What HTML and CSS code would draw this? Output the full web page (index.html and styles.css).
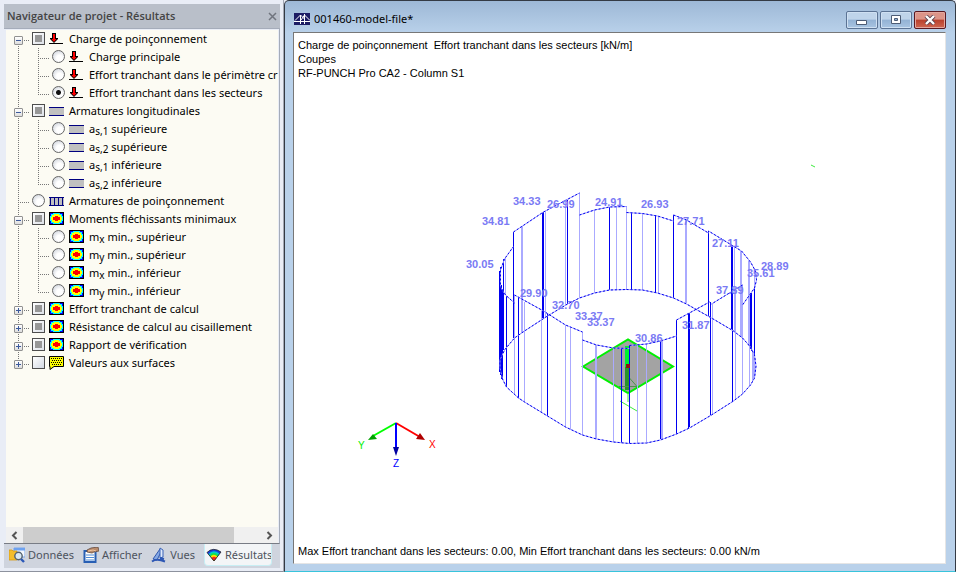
FILE: index.html
```html
<!DOCTYPE html>
<html lang="fr">
<head>
<meta charset="utf-8">
<title>001460-model-file</title>
<link rel="stylesheet" href="styles.css">
</head>
<body>
<svg class="defs" aria-hidden="true">
  <defs>
    <symbol id="i-load" viewBox="0 0 15 14">
      <path d="M3 1h4v5h2v1L5 11 1 7V6h2z" fill="#000"/>
      <path d="M4 2h2v5h1.500L5 10 2.500 7H4z" fill="#f00"/>
      <path d="M0 11.500h14" stroke="#000"/>
    </symbol>
    <symbol id="i-rebar" viewBox="0 0 15 14">
      <path d="M0 3h15v9H0z" fill="#c0c0c0"/>
      <path d="M0 3.500h15M0 11.500h15" stroke="#000080"/>
    </symbol>
    <symbol id="i-punch" viewBox="0 0 15 14">
      <path d="M0 3h15v9H0z" fill="#c0c0c0"/>
      <path d="M0 3.500h15M0 11.500h15M1.500 3v9M5.500 3v9M9.500 3v9M13.500 3v9" stroke="#000080"/>
    </symbol>
    <symbol id="i-iso" viewBox="0 0 15 14">
      <path d="M0 0h15v13H0z" fill="#00f"/>
      <path d="M0 0h2v1H1v1H0zM15 0h-2v1h1v1h1zM0 13h2v-1H1v-1H0zM15 13h-2v-1h1v-1h1z"/>
      <path d="M4 1h7v1h2v2h1v5h-1v2h-2v1H4v-1H2V9H1V4h1V2h2z" fill="#0ff"/>
      <path d="M5 2h5v1h2v2h1v3h-1v2h-2v1H5v-1H3V8H2V5h1V3h2z" fill="#ff0"/>
      <path d="M6 4h3v1h2v3H9v1H6V8H4V5h2z" fill="#f00"/>
      <path d="M.5.500h14v12H.500z" fill="none" stroke="#000"/>
    </symbol>
    <symbol id="i-note" viewBox="0 0 15 14">
      <path d="M.5.500h14v10H5L1 13.500V10.500H.500z" fill="#ff0" stroke="#000"/>
      <path d="M2 2.500h11M3 4.500h10M2 6.500h11M3 8.500h10" stroke="#000" stroke-dasharray="1 1"/>
    </symbol>
  </defs>
</svg>
<div class="app">
  <aside class="navigator">
    <div class="panel">
      <header class="panel-title">
        <h1>Navigateur de projet - Résultats</h1>
        <button class="panel-close" aria-label="Fermer"><svg viewBox="0 0 9 9"><path d="M1 1l7 7M8 1L1 8"/></svg></button>
      </header>
      <div class="tree-frame">
        <ul class="tree">
          <li>
            <div class="row"><span class="guide first"><button class="toggle open" aria-label="Réduire"></button></span><input type="checkbox" class="partial" id="n1"><svg class="icon"><use href="#i-load"/></svg><label for="n1">Charge de poinçonnement</label></div>
            <ul>
              <li class="row"><span class="pass"></span><span class="guide"></span><input type="radio" name="r" id="n2"><svg class="icon"><use href="#i-load"/></svg><label for="n2">Charge principale</label></li>
              <li class="row"><span class="pass"></span><span class="guide"></span><input type="radio" name="r" id="n3"><svg class="icon"><use href="#i-load"/></svg><label for="n3">Effort tranchant dans le périmètre critique</label></li>
              <li class="row"><span class="pass"></span><span class="guide last"></span><input type="radio" name="r" id="n4" checked><svg class="icon"><use href="#i-load"/></svg><label for="n4">Effort tranchant dans les secteurs</label></li>
            </ul>
          </li>
          <li>
            <div class="row"><span class="guide"><button class="toggle open" aria-label="Réduire"></button></span><input type="checkbox" class="partial" id="n5"><svg class="icon"><use href="#i-rebar"/></svg><label for="n5">Armatures longitudinales</label></div>
            <ul>
              <li class="row"><span class="pass"></span><span class="guide"></span><input type="radio" name="r" id="n6"><svg class="icon"><use href="#i-rebar"/></svg><label for="n6">a<sub>s,1</sub> supérieure</label></li>
              <li class="row"><span class="pass"></span><span class="guide"></span><input type="radio" name="r" id="n7"><svg class="icon"><use href="#i-rebar"/></svg><label for="n7">a<sub>s,2</sub> supérieure</label></li>
              <li class="row"><span class="pass"></span><span class="guide"></span><input type="radio" name="r" id="n8"><svg class="icon"><use href="#i-rebar"/></svg><label for="n8">a<sub>s,1</sub> inférieure</label></li>
              <li class="row"><span class="pass"></span><span class="guide last"></span><input type="radio" name="r" id="n9"><svg class="icon"><use href="#i-rebar"/></svg><label for="n9">a<sub>s,2</sub> inférieure</label></li>
            </ul>
          </li>
          <li class="row"><span class="guide"></span><input type="radio" name="r" id="n10"><svg class="icon"><use href="#i-punch"/></svg><label for="n10">Armatures de poinçonnement</label></li>
          <li>
            <div class="row"><span class="guide"><button class="toggle open" aria-label="Réduire"></button></span><input type="checkbox" class="partial" id="n11"><svg class="icon"><use href="#i-iso"/></svg><label for="n11">Moments fléchissants minimaux</label></div>
            <ul>
              <li class="row"><span class="pass"></span><span class="guide"></span><input type="radio" name="r" id="n12"><svg class="icon"><use href="#i-iso"/></svg><label for="n12">m<sub>x</sub> min., supérieur</label></li>
              <li class="row"><span class="pass"></span><span class="guide"></span><input type="radio" name="r" id="n13"><svg class="icon"><use href="#i-iso"/></svg><label for="n13">m<sub>y</sub> min., supérieur</label></li>
              <li class="row"><span class="pass"></span><span class="guide"></span><input type="radio" name="r" id="n14"><svg class="icon"><use href="#i-iso"/></svg><label for="n14">m<sub>x</sub> min., inférieur</label></li>
              <li class="row"><span class="pass"></span><span class="guide last"></span><input type="radio" name="r" id="n15"><svg class="icon"><use href="#i-iso"/></svg><label for="n15">m<sub>y</sub> min., inférieur</label></li>
            </ul>
          </li>
          <li class="row"><span class="guide"><button class="toggle" aria-label="Développer"></button></span><input type="checkbox" class="partial" id="n16"><svg class="icon"><use href="#i-iso"/></svg><label for="n16">Effort tranchant de calcul</label></li>
          <li class="row"><span class="guide"><button class="toggle" aria-label="Développer"></button></span><input type="checkbox" class="partial" id="n17"><svg class="icon"><use href="#i-iso"/></svg><label for="n17">Résistance de calcul au cisaillement</label></li>
          <li class="row"><span class="guide"><button class="toggle" aria-label="Développer"></button></span><input type="checkbox" class="partial" id="n18"><svg class="icon"><use href="#i-iso"/></svg><label for="n18">Rapport de vérification</label></li>
          <li class="row"><span class="guide last"><button class="toggle" aria-label="Développer"></button></span><input type="checkbox" id="n19"><svg class="icon"><use href="#i-note"/></svg><label for="n19">Valeurs aux surfaces</label></li>
        </ul>
        <div class="scrollbar">
          <button aria-label="Défiler à gauche"><svg viewBox="0 0 7 9"><path d="M5.500 1L2 4.500 5.500 8"/></svg></button>
          <span class="thumb"></span>
          <button aria-label="Défiler à droite"><svg viewBox="0 0 7 9"><path d="M1.500 1L5 4.500 1.500 8"/></svg></button>
        </div>
      </div>
      <nav class="tabs">
        <button><svg viewBox="0 0 16 16"><path d="M5 1h11v9H5z" fill="#f4f8ff" stroke="#7aa7ea"/><path d="M5 1h11v2.500H5z" fill="#6ea2f0"/><path d="M0 3h3l1 1h4v9H0z" fill="#f3bd2c" stroke="#d79b10" stroke-width=".8"/><circle cx="9.500" cy="9" r="3.700" fill="#d9e8f4" stroke="#53606e" stroke-width="1.400"/><path d="M12 12l3 3" stroke="#2b58b8" stroke-width="2.400"/></svg>Données</button>
        <button><svg viewBox="0 0 16 16"><path d="M1.500 4h11v11h-11z" fill="#fff" stroke="#285fb4" stroke-width="2"/><path d="M3 8h8M3 10.500h8M3 13h8" stroke="#4f8ad4"/><path d="M4 3l4-2 7-1 1 4-5 1-2 1-5-1z" fill="#b98b6c" stroke="#62493c" stroke-width=".8"/><path d="M5 4l5-1 3 1" stroke="#f0c5a0" fill="none"/></svg>Afficher</button>
        <button><svg viewBox="0 0 16 16"><path d="M2 12l7-10 2 1-5 10z" fill="#86a9e4" stroke="#2f56ac"/><path d="M9 1l3 2v7l-3 1z" fill="#dfe9fb" stroke="#3862b8"/><path d="M1 14.500c4-3 8-2 13 0M9 11l4 1" stroke="#2d57b4" stroke-width="2" fill="none"/></svg>Vues</button>
        <button class="active" aria-current="page"><svg viewBox="0 0 16 16"><path d="M1 5.500Q7-.5 15 5l-7 9z" fill="#173ee0"/><path d="M2.500 7Q7 2 13.500 6.500L8 14z" fill="#0cc"/><path d="M3.500 8.500Q7 4 12.500 8L8 14z" fill="#15e24a"/><path d="M4.500 9.500Q7.500 6 11.500 9.500L8 14z" fill="#fd0"/><path d="M5.500 11Q8 8.500 10.500 11L8 14z" fill="#f22"/><path d="M1 5.500Q7-.5 15 5l-7 9z" fill="none" stroke="#222" stroke-width=".8"/></svg>Résultats</button>
      </nav>
    </div>
  </aside>
  <main class="window">
    <header class="window-title">
      <svg class="logo" viewBox="0 0 16 12"><path d="M0 0h16v12H0z" fill="#1c1c64"/><path d="M0 8.500h16M1 7.500L6.500 2v9M6.500 2l4 4M10.500 1v10M7 7l3.500-5L16 7.500" stroke="#fff" fill="none"/></svg>
      <h2>001460-model-file*</h2>
      <div class="controls">
        <button aria-label="Réduire"><svg viewBox="0 0 12 10"><path d="M.5 5.500h10v4H.500z" fill="#fff" stroke="#4d5c75"/></svg></button>
        <button aria-label="Agrandir"><svg viewBox="0 0 12 10"><path d="M1.500.500h9v8h-9z" fill="#fff" stroke="#4d5c75"/><path d="M4.500 3.500h3v2h-3z" fill="#8fb0d4" stroke="#4d5c75"/></svg></button>
        <button class="close" aria-label="Fermer"><svg viewBox="0 0 12 10"><path d="M2 1l8 8M10 1L2 9" stroke="#5c4250" stroke-width="4"/><path d="M2 1l8 8M10 1L2 9" stroke="#fff" stroke-width="2.400"/></svg></button>
      </div>
    </header>
    <section class="canvas">
      <div class="caption">Charge de poinçonnement&nbsp; Effort tranchant dans les secteurs [kN/m]<br>Coupes<br>RF-PUNCH Pro CA2 - Column S1</div>
      <svg class="model" viewBox="294 80 651 464" role="img" aria-label="Effort tranchant dans les secteurs">
        <defs>
          <g id="outline">
            <path d="M514.500 303L505.500 295 500.500 287V270L504.500 259 513.500 246.500M513.500 232L543.500 212 579.500 193M579.500 215L594.500 210 609.500 207 626.500 206.500M626.500 212.500L642.500 213.500 657.500 216 673.500 221M673.500 215L686.500 220 708.500 233V231L731.500 245 741.500 251 750.500 262 755.500 271 756.500 280 754.500 288 742.500 305M742.500 285L711.500 304M514.500 295L543.500 311 565.500 325 582.500 332M582.500 340L596.500 345 613.500 348 629.500 348.500M629.500 345.500L646.500 344 660.500 341 676.500 336M676.500 320L709.500 302"/>
            <path d="M626.500 289.500L642.500 290 657.500 293 673.500 298 686.500 304 711.500 318 733.500 331 742.500 338 750.500 347 754.500 355 756 366 754.500 378 750.500 385 742.500 394 733.500 401 711.500 415 689.500 428 676.500 434 660.500 440 646.500 443 629.500 443.500 613.500 442 596.500 439 582.500 435 565.500 427 547.500 416 524.500 402 518.500 398 506.500 387 502.500 379 500 368V360L504.500 350 514.500 338 524.500 331 547.500 316 567.500 304 579.500 298 594.500 293 609.500 290z"/>
          </g>
        </defs>
        <path d="M583 366.500L628 339.500 673 366.500 628 393z" fill="#a3a3a3" stroke="#00f000" stroke-width="2"/>
        <path d="M625 346h5v21h-5z" fill="#00f030"/><path d="M625 367h5v23h-5z" fill="#26942a"/>
        <path d="M619 386.500h18l-8-9" fill="none" stroke="#4b944b"/>
        <path d="M628 393v9M620 401l17 10M811 165l4 2" stroke="#3dec3d" fill="none"/>
        <g class="pale">
          <path d="M505.500 258v37M521.500 226v107M522.500 226v107M545.500 211v106M565.500 201v104M579.500 193v105M594.500 210v83M616.500 206v83M626.500 206v83M642.500 213v77M658.500 216v77M685.500 220v83M686.500 220v83M734.500 247v84M740.500 251v86M741.500 252v86M748.500 261v85M749.500 261v124M754.500 270v108M753.500 355v23M752.500 350v32"/>
          <path d="M514.500 295v99M524.500 302v100M541.500 311v101M565.500 325v102M570.500 328v101M582.500 332v103M595.500 345v94M596.500 345v94M613.500 348v94M637.500 345v98M646.500 344v98M661.500 341v98M662.500 341v98M712.500 303v112M735.500 290v110M742.500 285v109"/>
        </g>
        <g class="deep">
          <path d="M503.500 259v38M513.500 232v106M542.500 212v106M543.500 212v106M567.500 200v104M609.500 207v83M631.500 213v76M655.500 215v77M673.500 215v83M708.500 231v85M731.500 245v84M732.500 246v84"/>
          <path d="M499.500 271v101M500.500 267v108M501.500 285v94M502.500 289v91M503.500 292v58M506.500 296v91M518.500 298v100M547.500 314v102M621.500 348v95M629.500 345v98M660.500 341v98M676.500 320v114M688.500 313v115M689.500 313v114M710.500 302v113M732.500 292v109M750.500 294v55M751.500 293v58M754.500 288v67"/>
        </g>
        <use href="#outline" class="line"/><use href="#outline" class="line dots"/>
        <path d="M626 364h4v4h-4z" fill="#8b1111"/>
        <g class="values">
          <text x="513" y="205">34.33</text><text x="547" y="208">26.99</text><text x="595" y="206">24.91</text><text x="641" y="208">26.93</text>
          <text x="482" y="225">34.81</text><text x="677" y="225">27.71</text><text x="712" y="247">27.11</text><text x="466" y="268">30.05</text>
          <text x="761" y="270">28.89</text><text x="747" y="277">35.61</text><text x="716" y="294">37.89</text><text x="520" y="297">29.90</text>
          <text x="552" y="309">32.70</text><text x="575" y="320">33.37</text><text x="587" y="326">33.37</text><text x="682" y="329">31.87</text><text x="635" y="342">30.86</text>
        </g>
        <g class="axes">
          <path d="M396 423L420 437" stroke="#f00"/><path d="M425 440l-9-1 4-6z" fill="#b00000"/>
          <path d="M396 423L373 436" stroke="#0f0"/><path d="M368 440l5-6 4 5z" fill="#00a000"/>
          <path d="M396 423v25" stroke="#00f"/><path d="M396 456l-3-9h6z" fill="#0000a0"/>
          <text x="429" y="448" fill="#f00">X</text><text x="358" y="449" fill="#0e0">Y</text><text x="393" y="467" fill="#00f">Z</text>
        </g>
      </svg>
      <div class="caption">Max Effort tranchant dans les secteurs: 0.00, Min Effort tranchant dans les secteurs: 0.00 kN/m</div>
    </section>
  </main>
</div>
</body>
</html>
```
FILE: styles.css
```css
* { box-sizing: border-box; }
body { margin: 0; font: 11px/18px "Noto Sans", "Open Sans", sans-serif; color: #000; }
button { font: inherit; color: inherit; border: 0; padding: 0; margin: 0; background: none; }
h1, h2, ul { margin: 0; padding: 0; font-size: inherit; list-style: none; }
.defs { position: absolute; width: 0; height: 0; }
.app { display: grid; grid-template-columns: 284px 1fr; height: 100vh; background: #e9edf6; }

.navigator { padding: 4px 3px 3px 4px; border-bottom: 1px solid #8d929e; min-width: 0; border-right: 1px solid #a3a8b4; }
.panel { display: flex; flex-direction: column; height: 100%; background: #cfd4de; }
.panel-title { display: flex; align-items: center; justify-content: space-between; height: 24px; padding: 0 3px; background: #b9bfc9; color: #444; }
.panel-title h1 { font-family: "Open Sans", sans-serif; font-weight: 600; }
.panel-close { width: 9px; height: 18px; display: flex; align-items: center; }
.panel-close svg { width: 9px; height: 9px; stroke: #70757e; stroke-width: 1.500; }
.tree-frame { flex: 1; display: flex; flex-direction: column; min-height: 0; padding: 1px 1px 0 2px; border: 1px solid #a5acba; border-width: 1px 1px 1px 0; border-bottom-color: #787c85; background: #e9edf6; }
.tree { flex: 1; overflow: hidden; background: #fcfbf3; padding-left: 3px; }
.row { display: flex; align-items: center; height: 18px; white-space: nowrap; }
.guide, .pass { position: relative; flex: none; width: 20px; height: 18px; }
.guide::before, .pass::before { content: ""; position: absolute; left: 9px; top: 0; bottom: 0; width: 1px; background: repeating-linear-gradient(#777 0 1px, transparent 1px 2px); }
.guide::after { content: ""; position: absolute; left: 9px; right: 0; top: 10px; height: 1px; background: repeating-linear-gradient(90deg, #777 0 1px, transparent 1px 2px); }
.guide.last::before { bottom: 8px; }
.guide.first::before { top: 10px; }
.toggle { position: absolute; z-index: 1; left: 5px; top: 6px; width: 9px; height: 9px; border: 1px solid #919191; border-radius: 1px; background: linear-gradient(#3c5a9c, #3c5a9c) center / 5px 1px no-repeat, linear-gradient(#3c5a9c, #3c5a9c) center / 1px 5px no-repeat, linear-gradient(#fff, #ddd); }
.toggle.open { background: linear-gradient(#3c5a9c, #3c5a9c) center / 5px 1px no-repeat, linear-gradient(#fff, #ddd); }
.row input { appearance: none; flex: none; width: 13px; height: 13px; margin: 0 4px 1px 3px; border: 1px solid #4d4d4d; background: linear-gradient(135deg, #fff, #d2d8e2); }
.row input.partial { background: linear-gradient(#979797, #979797) center / 7px 7px no-repeat, linear-gradient(135deg, #fff, #dde1e8); }
.row input[type="radio"] { border-radius: 50%; border-color: #666; background: radial-gradient(circle at 60% 65%, #fff 30%, #c3c9d3); }
.row input[type="radio"]:checked { background: radial-gradient(circle, #111 0 2px, transparent 3px), radial-gradient(circle at 60% 65%, #fff 30%, #c3c9d3); }
.icon { flex: none; width: 15px; height: 14px; margin-right: 5px; }
sub { font-size: 10px; line-height: 10px; vertical-align: -2px; }
.scrollbar { display: flex; height: 16px; background: #f0f0f0; }
.scrollbar button { display: flex; align-items: center; justify-content: center; width: 17px; }
.scrollbar svg { width: 7px; height: 9px; fill: none; stroke: #555; stroke-width: 2; }
.thumb { width: 211px; margin-right: auto; background: #cdcdcd; }
.tabs { display: flex; height: 24px; padding: 0 8px 0 5px; gap: 9px; color: #4d535d; white-space: nowrap; }
.tabs button { display: flex; align-items: center; gap: 3px; height: 22px; overflow: hidden; }
.tabs svg { flex: none; width: 16px; height: 16px; }
.tabs .active { flex: 1; padding-left: 1px; background: #f3f5f7; border: 1px solid #c8eef4; border-top: 0; border-radius: 0 0 4px 4px; }

.window { display: flex; flex-direction: column; min-width: 0; padding: 0 9px 7px 8px; background: linear-gradient(#9db8d6, #b9d1ea 32px, #b9d1ea); border: 1px solid #333a44; border-bottom-color: #39c4dc; border-radius: 5px 5px 0 0; }
.window-title { display: flex; align-items: center; height: 31px; padding: 4px 0 0 1px; }
.logo { width: 16px; height: 12px; margin-right: 4px; }
.window-title h2 { font-weight: 400; }
.controls { display: flex; gap: 2px; margin-left: auto; margin-top: 2px; }
.controls button { display: flex; align-items: center; justify-content: center; width: 32px; height: 18px; border: 1px solid #5b7394; border-radius: 2px; box-shadow: inset 0 0 0 1px #cfe0f2; background: linear-gradient(#bfd4ea 45%, #93b2d4 50%, #a9c5e2); }
.controls .close { border-color: #5a1820; box-shadow: inset 0 0 0 1px #e3a79f; background: linear-gradient(#dc9488 45%, #b9402c 50%, #cf6650); }
.controls svg { width: 12px; height: 10px; }
.canvas { flex: 1; display: flex; flex-direction: column; min-height: 0; padding: 5px 0; background: #fff; border: 1px solid #777; border-right-color: #e5e5e5; border-bottom-color: #e5e5e5; }
.caption { padding-left: 4px; font: 11px/14px "Liberation Sans", sans-serif; white-space: nowrap; }
.model { flex: 1; display: block; width: 100%; min-height: 0; }
.line { fill: none; stroke: #9c9cff; }
.dots { stroke: #0000f0; stroke-dasharray: 2 2; }
.pale path { stroke: #aaaaff; shape-rendering: crispEdges; }
.deep path { stroke: #0000f0; shape-rendering: crispEdges; }
.values { font: bold 11px "Liberation Sans", sans-serif; fill: #7a7af4; }
.axes { stroke-width: 2; font: 10px "Liberation Sans", sans-serif; }
.axes text { stroke: none; }
```
